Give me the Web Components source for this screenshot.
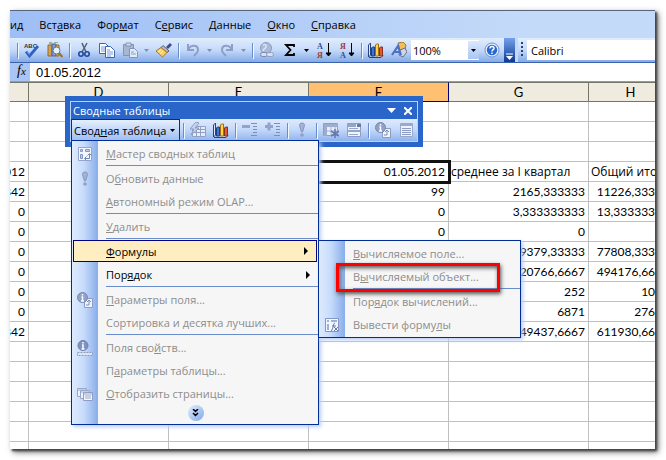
<!DOCTYPE html>
<html lang="ru">
<head>
<meta charset="utf-8">
<title>Сводные таблицы</title>
<style>
  body {
    margin: 0;
    background: #fff;
    font-family: "Open Sans", "Noto Sans", sans-serif;
    font-size: 11px;
    color: #000;
  }
</style>
</head>
<body>
<excel-window>
  <menu-bar slot="menu">
    <a href="#view">ид</a>
    <a href="#insert">Вст<u>а</u>вка</a>
    <a href="#format">Фор<u>м</u>ат</a>
    <a href="#tools">С<u>е</u>рвис</a>
    <a href="#data"><u>Д</u>анные</a>
    <a href="#window"><u>О</u>кно</a>
    <a href="#help"><u>С</u>правка</a>
  </menu-bar>
  <main-toolbar slot="toolbar"></main-toolbar>
  <formula-bar slot="formula" value="01.05.2012"></formula-bar>
  <sheet-grid slot="sheet"></sheet-grid>
  <pivot-toolbar slot="floating">
    <popup-menu>
      <menu-item icon="wizard" disabled><u>М</u>астер сводных таблиц</menu-item>
      <menu-item icon="refresh" disabled line>О<u>б</u>новить данные</menu-item>
      <menu-item disabled><u>А</u>втономный режим OLAP...</menu-item>
      <menu-item disabled line><u>У</u>далить</menu-item>
      <menu-item arrow active line><u>Ф</u>ормулы
        <popup-menu slot="sub">
          <menu-item disabled><u>В</u>ычисляемое поле...</menu-item>
          <menu-item disabled marked>В<u>ы</u>числяемый объект...</menu-item>
          <menu-item disabled line>Пор<u>я</u>док вычислений...</menu-item>
          <menu-item icon="formulas" disabled>Вывести форму<u>л</u>ы</menu-item>
        </popup-menu>
      </menu-item>
      <menu-item arrow>Пор<u>я</u>док</menu-item>
      <menu-item icon="field" disabled line><u>П</u>араметры поля...</menu-item>
      <menu-item disabled>Сортировка и <u>д</u>есятка лучших...</menu-item>
      <menu-item icon="props" disabled line>Поля сво<u>й</u>ств...</menu-item>
      <menu-item disabled>П<u>а</u>раметры таблицы...</menu-item>
      <menu-item icon="pages" disabled><u>О</u>тобразить страницы...</menu-item>
      <menu-more slot="footer"></menu-more>
    </popup-menu>
  </pivot-toolbar>
</excel-window>

<script>
const ICONS = {
  spell: '<text x="0" y="6" font-family="Liberation Sans" font-size="6" font-weight="700" fill="#333">ABC</text><path d="M2 9.5l3.500 4.500L14 4" fill="none" stroke="#2d62c4" stroke-width="2.800"/><path d="M3 9.500l2.500 3" stroke="#7fa8ef" fill="none"/>',
  research: '<path d="M1 3h4v11H1z" fill="#d8a24c" stroke="#8a6a3a"/><path d="M5 2h4v12H5z" fill="#7f9ed0" stroke="#4d6598"/><path d="M9 3h3v11H9z" fill="#d9b063" stroke="#8c6a35"/><path d="M2 1h3M7 0h4" stroke="#5a7a50"/><circle cx="9.500" cy="8.500" r="3.500" fill="#e5f1fc" stroke="#6b7688"/><path d="M12 11l3.500 4" stroke="#a07028" stroke-width="2"/>',
  cut: '<path d="M6 1l4 9M11 1L6 10" stroke="#55606e" stroke-width="1.500" fill="none"/><circle cx="5" cy="12" r="2.200" fill="none" stroke="#23479f" stroke-width="1.600"/><circle cx="11" cy="12" r="2.200" fill="none" stroke="#23479f" stroke-width="1.600"/>',
  copy: '<path d="M.5 1.500h6l3 3v7h-9z" fill="#fff" stroke="#3f63ad"/><path d="M2 5h4M2 7h5M2 9h5" stroke="#6f9be0"/><path d="M6.500 4.500h5l4 4v7h-9z" fill="#fff" stroke="#3f63ad"/><path d="M8 8h3M8 10h6M8 12h6M8 14h4" stroke="#6f9be0"/>',
  paste: '<path d="M1.500 2.500h10v11h-10z" fill="#a9b6d2" stroke="#8392b5"/><path d="M4 1h5v3H4z" fill="#d6deee" stroke="#8392b5"/><path d="M7.500 6.500h5l3 3v6h-8z" fill="#e2eaf8" stroke="#8494ba"/><path d="M9 10h3M9 12h5" stroke="#8c9fc9"/>',
  brush: '<path d="M10 5l4-4 2 2-4 4z" fill="#3c4c8c"/><path d="M7 3.500l6 5.500-2 1.500-6-5z" fill="#b9bcc8" stroke="#5c6070"/><path d="M5 5.500l6 5-4.500 4.500L0 9z" fill="#f8cf68" stroke="#a87722"/><path d="M2 10l3-2M4 12l3-3" stroke="#fff3c0"/>',
  undo: '<path d="M3 2v6h6" fill="none" stroke="#8d9fc8" stroke-width="2"/><path d="M3 8c2-5 9-6 10-1 .5 3-2 5-4 7" fill="none" stroke="#8d9fc8" stroke-width="2"/>',
  redo: '<path d="M13 2v6H7" fill="none" stroke="#8d9fc8" stroke-width="2"/><path d="M13 8C11 3 4 2 3 7c-.5 3 2 5 4 7" fill="none" stroke="#8d9fc8" stroke-width="2"/>',
  link: '<circle cx="7" cy="6" r="5.500" fill="#aabada" stroke="#8c9cc0"/><path d="M4 3c2-1 4 0 3 2s-3 2-3 4" stroke="#dce5f5" fill="none" stroke-width="1.500"/><rect x="1.500" y="10.500" width="7" height="4" rx="2" fill="#d5e0f4" stroke="#7787ad"/><rect x="7.500" y="10.500" width="7" height="4" rx="2" fill="#d5e0f4" stroke="#8f9dbf"/>',
  sum: '<path d="M12 5V3H4l4.500 5L4 13h8v-2" fill="none" stroke="#000" stroke-width="1.800"/>',
  sortAZ: '<text x="1" y="7" font-family="Liberation Serif" font-size="8" font-weight="700" fill="#2f4f9b">А</text><text x="1" y="16" font-family="Liberation Serif" font-size="8" font-weight="700" fill="#9b3a3a">Я</text><path d="M12.500 1v12M10 11l2.500 3L15 11z" stroke="#000" fill="#000"/>',
  sortZA: '<text x="1" y="7" font-family="Liberation Serif" font-size="8" font-weight="700" fill="#9b3a3a">Я</text><text x="1" y="16" font-family="Liberation Serif" font-size="8" font-weight="700" fill="#2f4f9b">А</text><path d="M12.500 1v12M10 11l2.500 3L15 11z" stroke="#000" fill="#000"/>',
  chart: '<path d="M.5 3l2-2v12l-2 2zM1 15.500h12l2-2" fill="#dce8fc" stroke="#26437f"/><path d="M3.500 6l1-1h2v9h-3z" fill="#3e74d8" stroke="#1f3f85"/><path d="M7.500 3l1-1h2v12h-3z" fill="#ffd34a" stroke="#a56d12"/><path d="M11.500 6l1-1h2v9h-3z" fill="#e05a35" stroke="#87301c"/>',
  drawing: '<path d="M7 1l5-1 3 3-1 5-5 1z" fill="#f2bc58" stroke="#a8792c"/><path d="M9 8l5-2 2 4-4 5-4-2z" fill="#d0d6e4" stroke="#666f88"/><path d="M1 13L7 4l3 9M3 10h6" fill="none" stroke="#4c70c4" stroke-width="2.200"/>',
  help: '<circle cx="8" cy="8" r="7" fill="#e3eefc" stroke="#6f92cc"/><circle cx="8" cy="8" r="5.200" fill="#2868d2"/><path d="M6 6.500c0-3 4.500-2.500 4 0-.3 1.200-2 1.300-2 3M8 10.500v1.500" fill="none" stroke="#fff" stroke-width="1.500"/>',
  wizard: '<path d="M1.500 1.500h13v13h-13z" fill="#f3f6fd" stroke="#97a5c9"/><path d="M3.500 3.500h2v2h-2zM8.500 3.500h4v2h-4zM3.500 8.500h2v4h-2z" fill="#c3cfe9" stroke="#8497c4"/><path d="M8 12.500h4.500V8M10.500 9.500l2-2 2 2M9.500 10.500l-2 2 2 2" fill="none" stroke="#7488b8"/>',
  refresh: '<path d="M8 1c2.500 0 3 2 2 4L8.500 10h-1L6 5c-1-2-.5-4 2-4z" fill="#a3b3d8" stroke="#8494bd"/><circle cx="8" cy="13" r="1.800" fill="#8f9fc8"/>',
  report: '<path d="M2.500 4.500h13v10h-13z" fill="#e5ecfa" stroke="#91a1c6"/><path d="M2 7.500h14M2 10.500h14M6.500 5v10M10.500 5v10" stroke="#91a1c6"/><path d="M6 0L0 7h4L1 13l8-7H5l4-5z" fill="#cad5ec" stroke="#8a9cc4"/>',
  hide: '<path d="M0 3h8v3H0z" fill="#92a3cc"/><path d="M9 1.500h6M11 4.500h4M11 7.500h4M11 10.500h4M9 13.500h6" stroke="#7d8fb9"/>',
  show: '<path d="M0 3h8v3H0zM2.500 0.500h3v8h-3z" fill="#92a3cc"/><path d="M9 1.500h6M11 4.500h4M11 7.500h4M11 10.500h4M9 13.500h6" stroke="#7d8fb9"/>',
  hidden: '<path d="M.5 1.500h14v12H.5z" fill="#e8effc" stroke="#8c9cc2"/><path d="M1 2h14v3H1zM1 5h3v9H1z" fill="#9dadd0"/><path d="M4 9h11M8 2v12M12 2v12" stroke="#a2b0d2"/><path d="M12 7v9M8 9l8 5M16 9l-8 5" stroke="#6478ad" stroke-width="1.500"/>',
  always: '<path d="M1.500 1.500h13v13h-13z" fill="#f0f4fd" stroke="#8c9cc2"/><path d="M1 2h9v3H1zM1 8h14v2H1z" fill="#94a5ca"/><path d="M11 2h4v3h-4z" fill="#6679a9"/><path d="M3 6.500h9M3 12.500h9" stroke="#98a7cb"/>',
  field: '<path d="M7.500 6.500h8v9h-8z" fill="#eff3fc" stroke="#8d9dc2"/><path d="M9 13h3V9M10 10l2-2 2 2" fill="none" stroke="#7f90b8"/><circle cx="5.500" cy="5.500" r="5" fill="#8fa1c8" stroke="#7688b2"/><path d="M5.500 2v1.500M4.500 5h1v4M4 9h3" stroke="#fff" stroke-width="1.500" fill="none"/>',
  list: '<path d="M2.500 1.500h12v13h-12z" fill="#edf3fe" stroke="#98a8cc"/><path d="M2 2h13v2H2z" fill="#9aaacd"/><path d="M4 6.500h9M4 8.500h9M4 10.500h9M4 12.500h9" stroke="#8b9bc2"/>',
  props: '<circle cx="6" cy="5.500" r="5" fill="#7f93c0" stroke="#6b7eac"/><path d="M6 2v1.500M5 5h1v4M4.500 9h3" stroke="#fff" stroke-width="1.500" fill="none"/><path d="M.5 12.500h15v3H.5z" fill="#dce4f4" stroke="#8b9cc4" stroke-dasharray="2 1"/>',
  pages: '<path d="M.5 2.500h9v8h-9z" fill="#eef3fc" stroke="#98a7ca"/><path d="M3.500 4.500h9v8h-9z" fill="#eef3fc" stroke="#98a7ca"/><path d="M6.500 6.500h9v8h-9z" fill="#f4f7fd" stroke="#8c9cc2"/><path d="M7 8h8M8 10h6M8 12h6M1 4h8M4 6h8" stroke="#98a7ca"/>',
  formulas: '<path d="M1.500 1.500h13v13h-13z" fill="#f3f6fd" stroke="#8497c4"/><path d="M3 3h2v2H3zM7 3h6v2H7zM3 7h2v6H3z" fill="#9fb0d6"/><path d="M11 6c-2 0-1.500 6-4 8M8 9h4M10 10l4 4M14 10l-4 4" fill="none" stroke="#6579ac"/>'
};

function icon(name) {
  return `<svg width="16" height="16" viewBox="0 0 16 16" aria-hidden="true">${ICONS[name]}</svg>`;
}

class ExcelWindow extends HTMLElement {
  constructor() {
    super();
    this.attachShadow({ mode: 'open' });
    this.shadowRoot.innerHTML = `
      <style>
        :host {
          display: block;
          box-sizing: border-box;
          height: 100vh;
          padding: 10px 11px 11px 10px;
          overflow: hidden;
        }
        .frame {
          position: relative;
          display: flex;
          flex-direction: column;
          height: 100%;
          box-sizing: border-box;
          border-top: 1px solid #56657c;
          background: #fff;
          box-shadow: 2px 2px 2px #444, 3px 3px 6px #666;
        }
        .sheet {
          flex: 1;
          min-height: 0;
          overflow: hidden;
        }
        .floating {
          position: absolute;
          left: 55px;
          top: 85px;
        }
      </style>
      <div class="frame">
        <slot name="menu"></slot>
        <slot name="toolbar"></slot>
        <slot name="formula"></slot>
        <div class="sheet"><slot name="sheet"></slot></div>
        <div class="floating"><slot name="floating"></slot></div>
      </div>
    `;
  }
}
customElements.define('excel-window', ExcelWindow);

class MenuBar extends HTMLElement {
  constructor() {
    super();
    this.attachShadow({ mode: 'open' });
    this.shadowRoot.innerHTML = `
      <style>
        :host {
          display: block;
          background: linear-gradient(90deg, #9ebef5, #c4daf9 80%);
        }
        nav {
          display: flex;
          align-items: center;
          gap: 16px;
          height: 27px;
          overflow: hidden;
          white-space: nowrap;
        }
        ::slotted(a) {
          color: #000;
          text-decoration: none;
        }
      </style>
      <nav><slot></slot></nav>
    `;
  }
}
customElements.define('menu-bar', MenuBar);

class ToolButton extends HTMLElement {
  connectedCallback() {
    this.attachShadow({ mode: 'open' });
    const dim = this.hasAttribute('dim') ? '#8090b0' : '#000';
    const drop = this.hasAttribute('drop')
      ? `<button class="drop" aria-label="more"><svg width="5" height="3"><path d="M0 0h5L2.500 3z" fill="${dim}"/></svg></button>`
      : '';
    this.shadowRoot.innerHTML = `
      <style>
        :host {
          display: flex;
          flex: none;
        }
        button {
          display: flex;
          align-items: center;
          justify-content: center;
          width: 23px;
          height: 22px;
          padding: 0;
          border: 0;
          background: none;
        }
        .drop {
          width: 11px;
        }
      </style>
      <button aria-label="${this.getAttribute('icon')}">${icon(this.getAttribute('icon'))}</button>${drop}
    `;
  }
}
customElements.define('tool-button', ToolButton);

class ToolLine extends HTMLElement {
  constructor() {
    super();
    this.attachShadow({ mode: 'open' });
    this.shadowRoot.innerHTML = `
      <style>
        :host {
          display: flex;
          flex: none;
          justify-content: center;
          width: 6px;
        }
        i {
          width: 1px;
          height: 15px;
          background: #6a8ccb;
          box-shadow: 1px 1px #f1f9ff;
        }
      </style>
      <i></i>
    `;
  }
}
customElements.define('tool-line', ToolLine);

class ComboBox extends HTMLElement {
  connectedCallback() {
    this.attachShadow({ mode: 'open' });
    this.shadowRoot.innerHTML = `
      <style>
        :host {
          display: flex;
          height: 20px;
          background: #fff;
        }
        select {
          flex: 1;
          min-width: 0;
          padding: 0 0 0 2px;
          border: 0;
          background: none;
          appearance: none;
          font: inherit;
          color: #000;
        }
        span {
          display: flex;
          align-items: center;
          justify-content: center;
          width: 11px;
          margin: 1px 0;
          background: linear-gradient(#dbe9fe, #a9c6f5);
        }
        :host([plain]) span {
          display: none;
        }
      </style>
      <select aria-label="${this.getAttribute('label')}"><option>${this.getAttribute('value')}</option></select>
      <span><svg width="5" height="3"><path d="M0 0h5L2.500 3z"/></svg></span>
    `;
  }
}
customElements.define('combo-box', ComboBox);

class MainToolbar extends HTMLElement {
  constructor() {
    super();
    this.attachShadow({ mode: 'open' });
    this.shadowRoot.innerHTML = `
      <style>
        :host {
          display: flex;
          gap: 3px;
          background: #c3d9f9;
          border-bottom: 1px solid #3b62ad;
          overflow: hidden;
        }
        .bar {
          display: flex;
          align-items: center;
          height: 24px;
          background: linear-gradient(#e1edfe, #c5dafa 50%, #85aae6);
        }
        .std {
          padding-left: 4px;
        }
        .zoom {
          width: 68px;
          margin: 0 1px;
        }
        .end {
          align-self: stretch;
          display: flex;
          align-items: flex-end;
          justify-content: center;
          width: 11px;
          padding: 0 0 2px;
          border: 0;
          margin-left: 1px;
          background: linear-gradient(#75a0ea, #0a3a94);
        }
        .fmt {
          flex: 1;
        }
        .grip {
          width: 2px;
          height: 16px;
          margin: 0 4px 0 3px;
          background: repeating-linear-gradient(#27417f 0 2px, transparent 2px 4px);
        }
        .font {
          flex: 1;
          padding-left: 2px;
        }
      </style>
      <div class="bar std">
        <tool-line></tool-line>
        <tool-button icon="spell"></tool-button>
        <tool-button icon="research"></tool-button>
        <tool-line></tool-line>
        <tool-button icon="cut"></tool-button>
        <tool-button icon="copy"></tool-button>
        <tool-button icon="paste" drop dim></tool-button>
        <tool-button icon="brush"></tool-button>
        <tool-line></tool-line>
        <tool-button icon="undo" drop dim></tool-button>
        <tool-button icon="redo" drop dim></tool-button>
        <tool-line></tool-line>
        <tool-button icon="link"></tool-button>
        <tool-button icon="sum" drop></tool-button>
        <tool-button icon="sortAZ"></tool-button>
        <tool-button icon="sortZA"></tool-button>
        <tool-line></tool-line>
        <tool-button icon="chart"></tool-button>
        <tool-button icon="drawing"></tool-button>
        <combo-box class="zoom" label="Масштаб" value="100%"></combo-box>
        <tool-button icon="help"></tool-button>
        <button class="end" aria-label="Параметры">
          <svg width="7" height="7"><path d="M0 1h7" stroke="#fff"/><path d="M0 3h7L3.500 7z" fill="#fff"/></svg>
        </button>
      </div>
      <div class="bar fmt">
        <div class="grip"></div>
        <combo-box class="font" label="Шрифт" value="Calibri" plain></combo-box>
      </div>
    `;
  }
}
customElements.define('main-toolbar', MainToolbar);

class FormulaBar extends HTMLElement {
  connectedCallback() {
    this.attachShadow({ mode: 'open' });
    this.shadowRoot.innerHTML = `
      <style>
        :host {
          display: flex;
          height: 18px;
          border-bottom: 1px solid #9c9c94;
        }
        label {
          width: 20px;
          box-sizing: border-box;
          padding-left: 7px;
          background: #a9c5f6;
          font: italic 14px/16px "Liberation Serif", serif;
        }
        small {
          font-size: 11px;
        }
        input {
          flex: 1;
          min-width: 0;
          padding: 0 6px;
          border: 0;
          font: 13px "Liberation Sans", sans-serif;
          color: #000;
        }
      </style>
      <label for="formula">f<small>x</small></label>
      <input id="formula" value="${this.getAttribute('value')}">
    `;
  }
}
customElements.define('formula-bar', FormulaBar);

class SheetGrid extends HTMLElement {
  constructor() {
    super();
    this.attachShadow({ mode: 'open' });
    const rows = [
      [], [], [],
      ['012', '', '', '01.05.2012', 'среднее за I квартал', 'Общий итог'],
      ['842', '', '', '99', '2165,333333', '11226,33333'],
      ['0', '', '', '0', '3,333333333', '13,33333333'],
      ['0', '', '', '0', '0', ''],
      ['0', '', '', '', '9379,33333', '77808,33333'],
      ['0', '', '', '', '20766,6667', '494176,6667'],
      ['0', '', '', '', '252', '1008'],
      ['0', '', '', '', '6871', '27684'],
      ['842', '', '', '', '49437,6667', '611930,6667'],
      [], [], [], [], [], []
    ];
    const body = rows.map((row, r) => {
      let cells = '';
      for (let c = 0; c < 6; c++) {
        const cls = r === 3 && c === 3 ? 'current' : r === 3 && c > 3 ? 'text' : '';
        cells += `<td class="${cls}">${row[c] || ''}</td>`;
      }
      return `<tr>${cells}</tr>`;
    }).join('');
    this.shadowRoot.innerHTML = `
      <style>
        :host {
          display: block;
          font-family: Lato, "Open Sans", sans-serif;
          font-size: 12px;
        }
        table {
          width: 784px;
          margin-left: -121px;
          table-layout: fixed;
          border-collapse: separate;
          border-spacing: 0;
        }
        col {
          width: 140px;
        }
        col:last-child {
          width: 84px;
        }
        th {
          height: 20px;
          box-sizing: border-box;
          padding: 0;
          border-top: 1px solid #75756a;
          border-right: 1px solid #75756a;
          border-bottom: 1px solid #75756a;
          background: #efebde;
          font-weight: 400;
          font-size: 13px;
          line-height: 18px;
        }
        th.current {
          background: #ffc072;
          border-right-color: #000080;
          border-bottom-color: #000080;
        }
        td {
          height: 20px;
          box-sizing: border-box;
          padding: 1px 3px 0 2px;
          border-right: 1px solid #c0c0c0;
          border-bottom: 1px solid #c0c0c0;
          line-height: 18px;
          text-align: right;
          white-space: nowrap;
        }
        td.text {
          font-family: "Open Sans", sans-serif;
          text-align: left;
        }
        td.current {
          outline: 3px solid #111;
          outline-offset: -1px;
        }
      </style>
      <table>
        <colgroup><col><col><col><col><col><col></colgroup>
        <thead><tr><th></th><th>D</th><th>E</th><th class="current">F</th><th>G</th><th>H</th></tr></thead>
        <tbody>${body}</tbody>
      </table>
    `;
  }
}
customElements.define('sheet-grid', SheetGrid);

class PivotToolbar extends HTMLElement {
  constructor() {
    super();
    this.attachShadow({ mode: 'open' });
    this.shadowRoot.innerHTML = `
      <style>
        :host {
          display: block;
          padding: 5px;
          background: #2a66c9;
        }
        .inner {
          border: 1px solid #b9d2fa;
        }
        header {
          display: flex;
          align-items: center;
          gap: 8px;
          height: 17px;
          padding: 0 5px 0 2px;
          color: #fff;
        }
        h2 {
          flex: 1;
          margin: 0;
          font-size: 11px;
          font-weight: 400;
          line-height: 16px;
        }
        header button {
          display: flex;
          padding: 0;
          border: 0;
          background: none;
        }
        .row {
          display: flex;
          align-items: center;
          height: 22px;
          background: linear-gradient(#dfebfe, #c3d8fa 50%, #8fb3ee);
        }
        .drop {
          position: relative;
          align-self: stretch;
        }
        .drop > button {
          display: flex;
          align-items: center;
          justify-content: space-between;
          height: 22px;
          min-width: 109px;
          box-sizing: border-box;
          padding: 0 4px 0 2px;
          border: 1px solid #002d96;
          border-bottom: 0;
          background: linear-gradient(#e6effd, #9bbcf2);
          font: inherit;
          color: #000;
          white-space: nowrap;
        }
        ::slotted(popup-menu) {
          position: absolute;
          left: 0;
          top: calc(100% - 1px);
          min-width: 248px;
        }
      </style>
      <div class="inner">
        <header>
          <h2>Сводные таблицы</h2>
          <button aria-label="Параметры"><svg width="9" height="5"><path d="M0 0h9L4.500 5z" fill="#fff"/></svg></button>
          <button aria-label="Закрыть"><svg width="8" height="8"><path d="M0 0l8 8M8 0L0 8" stroke="#fff" stroke-width="2"/></svg></button>
        </header>
        <div class="row">
          <div class="drop">
            <button><span>Свод<u>н</u>ая таблица</span><svg width="5" height="3"><path d="M0 0h5L2.500 3z"/></svg></button>
            <slot></slot>
          </div>
          <tool-line></tool-line>
          <tool-button icon="report"></tool-button>
          <tool-button icon="chart"></tool-button>
          <tool-line></tool-line>
          <tool-button icon="hide"></tool-button>
          <tool-button icon="show"></tool-button>
          <tool-line></tool-line>
          <tool-button icon="refresh"></tool-button>
          <tool-line></tool-line>
          <tool-button icon="hidden"></tool-button>
          <tool-button icon="always"></tool-button>
          <tool-line></tool-line>
          <tool-button icon="field"></tool-button>
          <tool-button icon="list"></tool-button>
        </div>
      </div>
    `;
  }
}
customElements.define('pivot-toolbar', PivotToolbar);

class PopupMenu extends HTMLElement {
  constructor() {
    super();
    this.attachShadow({ mode: 'open' });
    this.shadowRoot.innerHTML = `
      <style>
        :host {
          display: block;
          box-sizing: border-box;
          padding: 1px 0 1px 1px;
          border: 1px solid #002d96;
          background: linear-gradient(90deg, #dfebfe, #c6dbfb 12px, #88ade9 26px, #f6f6f6 26px);
          box-shadow: 2px 2px 4px #b9cdf6;
        }
      </style>
      <slot></slot>
      <slot name="footer"></slot>
    `;
  }
}
customElements.define('popup-menu', PopupMenu);

class MenuItem extends HTMLElement {
  connectedCallback() {
    this.attachShadow({ mode: 'open' });
    const name = this.getAttribute('icon');
    const arrow = this.hasAttribute('arrow')
      ? '<svg width="4" height="8"><path d="M0 0l4 4-4 4z"/></svg>'
      : '';
    this.shadowRoot.innerHTML = `
      <style>
        :host {
          display: block;
          position: relative;
        }
        :host([line])::before {
          content: "";
          display: block;
          height: 1px;
          margin: 0 0 1px 33px;
          background: #6a8ccb;
        }
        button {
          display: flex;
          align-items: center;
          width: 100%;
          height: 23px;
          padding: 0 8px 0 4px;
          border: 0;
          background: none;
          font: inherit;
          color: #000;
          text-align: left;
          white-space: nowrap;
        }
        button:disabled {
          color: #8d8d8d;
        }
        :host([active]) button {
          height: 22px;
          width: calc(100% - 1px);
          margin-bottom: 1px;
          padding: 0 8px 0 3px;
          border: 1px solid #000080;
          background: #ffeec2;
        }
        .pic {
          display: flex;
          width: 16px;
          margin-right: 13px;
        }
        .name {
          flex: 1;
        }
        ::slotted(popup-menu) {
          position: absolute;
          left: 100%;
          top: 2px;
          min-width: 203px;
        }
        .mark {
          position: absolute;
          left: 16px;
          right: 20px;
          top: -2px;
          bottom: -4px;
          z-index: 1;
          border: 3px solid #f00;
          box-shadow: 1px 2px 4px #555, inset 1px 2px 4px #555;
        }
      </style>
      <button ${this.hasAttribute('disabled') ? 'disabled' : ''}>
        <span class="pic">${name ? icon(name) : ''}</span>
        <span class="name"><slot></slot></span>${arrow}
      </button>
      <slot name="sub"></slot>
      ${this.hasAttribute('marked') ? '<div class="mark"></div>' : ''}
    `;
  }
}
customElements.define('menu-item', MenuItem);

class MenuMore extends HTMLElement {
  constructor() {
    super();
    this.attachShadow({ mode: 'open' });
    this.shadowRoot.innerHTML = `
      <style>
        :host {
          display: flex;
          justify-content: center;
          padding-bottom: 2px;
        }
        button {
          display: flex;
          align-items: center;
          justify-content: center;
          width: 16px;
          height: 16px;
          padding: 0;
          border: 0;
          border-radius: 50%;
          background: linear-gradient(135deg, #e4eefd, #7fa8ea);
        }
      </style>
      <button aria-label="Развернуть">
        <svg width="7" height="8"><path d="M1 0l2.500 2.500L6 0M1 4l2.500 2.500L6 4" fill="none" stroke="#000" stroke-width="1.500"/></svg>
      </button>
    `;
  }
}
customElements.define('menu-more', MenuMore);
</script>
</body>
</html>
